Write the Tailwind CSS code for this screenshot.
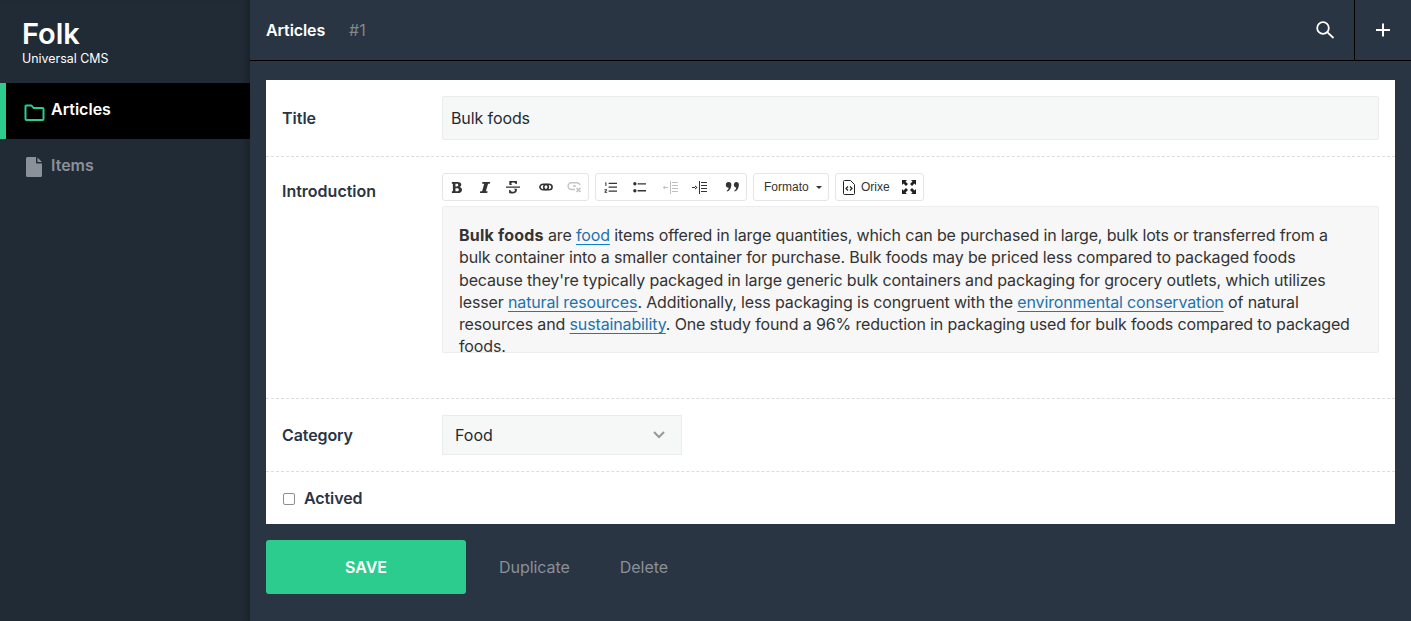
<!DOCTYPE html>
<html lang="en">
<head>
<meta charset="utf-8">
<title>Folk</title>
<script src="https://cdn.jsdelivr.net/npm/@tailwindcss/browser@4"></script>
</head>
<body class="m-0 overflow-hidden bg-[#293543] font-['Inter','Liberation_Sans',sans-serif]">
<div class="flex h-[621px] w-[1411px]">
  <aside class="w-[250px] shrink-0 bg-[#212b36] shadow-[inset_-8px_0_8px_-6px_rgba(0,0,0,0.3)]">
    <div class="h-[83px] pl-[22px] pt-[17px] text-white">
      <div class="text-[29px] font-semibold leading-[34px]">Folk</div>
      <div class="text-[12.4px] leading-[16px]">Universal CMS</div>
    </div>
    <nav>
      <a class="flex h-14 items-center border-l-[6px] border-[#2bcc8e] bg-black pl-[18px] text-[16px] font-semibold text-white">
        <svg class="mr-[6px] mt-[3px] h-[17px] w-[21px]" viewBox="0 0 21 17" fill="none" stroke="#2bcc8e" stroke-width="2"><path d="M1.500 15V2.500a1 1 0 0 1 1-1h5l2 2.500h9a1 1 0 0 1 1 1V15a1 1 0 0 1-1 1h-16a1 1 0 0 1-1-1z" stroke-linejoin="round"/></svg>
        <span class="-mt-1">Articles</span>
      </a>
      <a class="flex h-14 items-center pl-[26px] text-[16px] font-semibold text-[#8b9199]">
        <svg class="mr-[9px] h-5 w-4" viewBox="0 0 16 20" fill="#8b9199"><path d="M1.500 0H10v5.500a1 1 0 0 0 1 1h5V18.500a1.500 1.500 0 0 1-1.500 1.500h-13A1.500 1.500 0 0 1 0 18.500v-17A1.500 1.500 0 0 1 1.500 0zM11.500 0.500L16 5h-4.500z"/></svg>
        <span class="-mt-1">Items</span>
      </a>
    </nav>
  </aside>
  <main class="flex min-w-0 flex-1 flex-col">
    <header class="flex h-[61px] shrink-0 items-center border-b border-black pl-4">
      <span class="text-[16px] font-semibold tracking-[-0.1px] text-white">Articles</span>
      <span class="ml-[24px] text-[16px] text-[#80878f]">#1</span>
      <div class="ml-auto flex h-full items-center">
        <button class="mr-[17px] flex h-6 w-6 items-center justify-center">
          <svg class="h-[20px] w-[20px]" viewBox="0 0 20 20" fill="none" stroke="#fff" stroke-width="1.800"><circle cx="8" cy="8" r="5.800"/><path d="M12.200 12.200l5.800 5.300" stroke-linecap="round"/></svg>
        </button>
        <button class="flex h-full w-[57px] items-center justify-center border-l border-black">
          <svg class="h-4 w-4" viewBox="0 0 16 16" stroke="#fff" stroke-width="2"><path d="M8 1.500v13M1 8h14"/></svg>
        </button>
      </div>
    </header>
    <div class="px-4 pt-[19px]">
      <section class="w-[1129px] bg-white text-[#293543]">
        <div class="flex h-[77px] items-start border-b border-dashed border-[#dddddd] px-4 pt-4">
          <label class="mt-[11px] w-[160px] text-[16px] font-semibold leading-[22px]">Title</label>
          <input class="h-[44px] w-[937px] rounded-[2px] border border-[#ebeded] bg-[#f6f8f7] px-2 text-[16px] tracking-[-0.1px] text-[#1f2933]" value="Bulk foods">
        </div>
        <div class="flex h-[242px] items-start border-b border-dashed border-[#dddddd] px-4 pt-4">
          <label class="mt-[7px] w-[160px] text-[16px] font-semibold leading-[22px]">Introduction</label>
          <div class="w-[937px]">
            <div class="flex h-[28px] gap-[6px] font-['Liberation_Sans',sans-serif] text-[12px] text-[#333]">
              <div class="flex items-center rounded-[3px] border border-[#e5e5e5] bg-white">
                <span class="flex w-[28px] justify-center"><svg class="h-[13px] w-[12px]" viewBox="0 0 14 14" preserveAspectRatio="none" fill="#333"><path d="M1 1h6.700c2.700 0 4.300 1.100 4.300 2.900 0 1.200-.6 2-1.900 2.500 1.700.4 2.700 1.400 2.700 2.900 0 2.200-1.900 3.700-4.800 3.700H1V11h1.200V3H1zM5.200 3v2.800h1.600c1.100 0 1.700-.5 1.700-1.400S7.900 3 6.800 3zm0 4.700V11h1.900c1.300 0 2-.6 2-1.700S8.400 7.700 7.100 7.700z"/></svg></span>
                <span class="flex w-[28px] justify-center"><svg class="h-[13px] w-[12px]" viewBox="0 0 14 14" preserveAspectRatio="none" fill="#333"><path d="M4 1h9l-.4 2h-2L8 11h2l-.4 2H1l.4-2h2.200l2.500-8H3.600z"/></svg></span>
                <span class="flex w-[28px] justify-center"><svg class="h-[14px] w-[14px]" viewBox="0 0 14 14" fill="#333"><path d="M0 6.500h14v1.200H0zM3.300 1h7.600v3H9.500c-.2-1-.9-1.500-2.300-1.500-1.200 0-1.900.5-1.900 1.200 0 .5.300.9 1 1.300H3.700C3.400 4.600 3.200 4 3.300 3.500zM4.500 8.700h6.200c.2.400.3.900.2 1.300 0 2.200-1.700 3.500-4.300 3.500-1.300 0-2.600-.3-3.500-.6V10h1.300c.2 1.100 1.100 1.800 2.400 1.800 1.400 0 2.200-.6 2.200-1.500 0-.6-.4-1.200-1.500-1.600z"/></svg></span>
                <span class="ml-[5px] flex w-[28px] justify-center"><svg class="h-[8px] w-[14px]" viewBox="0 0 15 10" preserveAspectRatio="none" fill="none" stroke="#333" stroke-width="1.800"><rect x="1" y="1.500" width="9" height="7" rx="3.500"/><rect x="5" y="1.500" width="9" height="7" rx="3.500"/></svg></span>
                <span class="flex w-[28px] justify-center"><svg class="h-[12px] w-[15px]" viewBox="0 0 15 12" fill="none" stroke="#c4c4c4" stroke-width="1.500"><path d="M8 8.500H4.500a3.300 3.300 0 0 1 0-6.800h5.500a3.300 3.300 0 0 1 3 2.300M6 5h3"/><path d="M9.500 7l4 4m0-4l-4 4" stroke-width="1.700"/></svg></span>
              </div>
              <div class="flex items-center rounded-[3px] border border-[#e5e5e5] bg-white">
                <span class="flex w-[28px] justify-center"><svg class="h-[13px] w-[13px]" viewBox="0 0 14 13" fill="#333"><path d="M1 1h1.600v4H1.500V2H1zM0.500 8.500h2.800v1L1.700 11.200h1.700V12.200H.5v-1l1.700-1.800H.5zM5 1.500h9v1.300H5zM5 5.500h9v1.300H5zM5 9.800h9v1.300H5z"/></svg></span>
                <span class="ml-[1px] flex w-[28px] justify-center"><svg class="h-[13px] w-[13px]" viewBox="0 0 14 13" fill="#333"><circle cx="2" cy="2.500" r="1.800"/><circle cx="2" cy="10" r="1.800"/><path d="M5 1.800h9v1.400H5zM5 9.300h9v1.400H5z"/></svg></span>
                <span class="ml-[3px] flex w-[28px] justify-center"><svg class="h-[13px] w-[15px]" viewBox="0 0 15 13" fill="#c0c0c0"><path d="M0 6h5v1H0zM2 4.500v4L0 6.500zM7 0h1v13H7zM9 1h6v1H9zM9 4h6v1H9zM9 7h6v1H9zM9 10h6v1H9z"/></svg></span>
                <span class="ml-[1px] flex w-[28px] justify-center"><svg class="h-[13px] w-[15px]" viewBox="0 0 15 13" fill="#333"><path d="M0 6h4v1H0zM3 4.500v4L5.500 6.500zM7 0h1v13H7zM9 1h6v1H9zM9 4h6v1H9zM9 7h6v1H9zM9 10h6v1H9z"/></svg></span>
                <span class="ml-[5px] flex w-[28px] justify-center"><svg class="h-[10px] w-[15px]" viewBox="0 0 15 11" fill="#333"><path d="M3.200 0a3 3 0 0 1 3 3.200c0 3.400-2.100 6.400-4.600 7.300l-.6-1c1.300-.8 2.200-2 2.400-3.300A3 3 0 0 1 3.200 0zM11.500 0a3 3 0 0 1 3 3.200c0 3.400-2.100 6.400-4.600 7.300l-.6-1c1.300-.8 2.200-2 2.400-3.300a3 3 0 0 1 .8-6.200z"/></svg></span>
              </div>
              <div class="flex w-[76px] items-center rounded-[3px] border border-[#e5e5e5] bg-white pl-[10px]">
                <span>Formato</span>
                <span class="ml-[7px] h-0 w-0 border-x-[3px] border-t-[3px] border-x-transparent border-t-[#333]"></span>
              </div>
              <div class="flex w-[89px] items-center rounded-[3px] border border-[#e5e5e5] bg-white pl-[7px]">
                <svg class="h-[15px] w-[12px] shrink-0" viewBox="0 0 12 15" fill="none" stroke="#222"><path d="M.5 1.500a1 1 0 0 1 1-1H7.500L11.500 4.500v9a1 1 0 0 1-1 1h-9a1 1 0 0 1-1-1z"/><path d="M5 6.500L3 8.500l2 2M7 6.500l2 2-2 2" stroke-width="1.200"/></svg>
                <span class="ml-[6px]">Orixe</span>
                <svg class="ml-[12px] h-[14px] w-[14px] shrink-0" viewBox="0 0 14 14" fill="#222"><path d="M0 0h5L3.500 1.500 6 4 4 6 1.500 3.500 0 5zM14 0v5l-1.500-1.500L10 6 8 4l2.500-2.500L9 0zM0 14V9l1.500 1.500L4 8l2 2-2.500 2.500L5 14zM14 14H9l1.500-1.500L8 10l2-2 2.500 2.500L14 9z"/></svg>
              </div>
            </div>
            <div class="mt-[5px] h-[147px] overflow-hidden rounded-[2px] border border-[#eeeeee] bg-[#f7f7f7] px-4 pt-[17px] text-[16px] leading-[22.3px] tracking-[-0.14px] text-[#333]">
              <p><b class="font-bold tracking-[0.2px]">Bulk foods</b> are <a class="text-[#2272ad] underline decoration-[#0b7fc7] underline-offset-3">food</a> items offered in large quantities, which can be purchased in large, bulk lots or transferred from a bulk container into a smaller container for purchase. Bulk foods may be priced less compared to packaged foods because they're typically packaged in large generic bulk containers and packaging for grocery outlets, which utilizes lesser <a class="text-[#2272ad] underline decoration-[#0b7fc7] underline-offset-3">natural resources</a>. Additionally, less packaging is congruent with the <a class="text-[#2272ad] underline decoration-[#0b7fc7] underline-offset-3">environmental conservation</a> of natural resources and <a class="text-[#2272ad] underline decoration-[#0b7fc7] underline-offset-3">sustainability</a>. One study found a 96% reduction in packaging used for bulk foods compared to packaged foods.</p>
            </div>
          </div>
        </div>
        <div class="flex h-[73px] items-center border-b border-dashed border-[#dddddd] px-4">
          <label class="w-[160px] text-[16px] font-semibold tracking-[-0.1px] leading-[22px]">Category</label>
          <div class="flex h-10 w-[240px] items-center justify-between border border-[#ebeded] bg-[#f6f8f7] pl-3 pr-4 text-[16px] text-[#1f2933]">
            <span>Food</span>
            <svg class="h-[8px] w-[12px]" viewBox="0 0 12 8" fill="none" stroke="#999" stroke-width="2"><path d="M1 1l5 5 5-5"/></svg>
          </div>
        </div>
        <div class="flex h-[52px] items-start px-4 pt-[15px]">
          <input type="checkbox" class="ml-[1px] mt-[6px] h-[12px] w-[12px] appearance-none rounded-[2px] border border-[#8e8e8e] bg-white">
          <label class="ml-[9px] text-[16px] font-semibold tracking-[-0.1px] leading-[22px]">Actived</label>
        </div>
      </section>
      <div class="mt-4 flex items-center">
        <button class="h-[54px] w-[200px] rounded-[3px] bg-[#2bcc8e] text-[16px] font-semibold text-white">SAVE</button>
        <span class="ml-[33px] text-[16px] tracking-[-0.05px] text-[#8a9097]">Duplicate</span>
        <span class="ml-[50px] text-[16px] tracking-[-0.05px] text-[#8a9097]">Delete</span>
      </div>
    </div>
  </main>
</div>
</body>
</html>
